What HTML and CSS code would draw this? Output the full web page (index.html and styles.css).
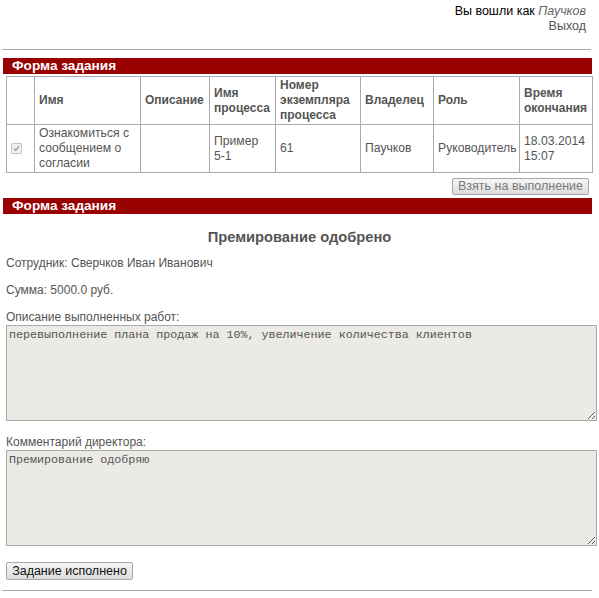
FILE: index.html
```html
<!DOCTYPE html>
<html lang="ru">
<head>
<meta charset="utf-8">
<title>Форма задания</title>
<link rel="stylesheet" href="styles.css">
</head>
<body>
<div class="userbar">
  <div>Вы вошли как <em>Паучков</em></div>
  <div><a href="#" class="logout">Выход</a></div>
</div>
<hr class="sep top-sep">

<div class="panel-title">Форма задания</div>
<table class="tasks">
  <colgroup>
    <col class="c-check"><col class="c-name"><col class="c-desc"><col class="c-proc"><col class="c-num"><col class="c-owner"><col class="c-role"><col class="c-time">
  </colgroup>
  <thead>
    <tr>
      <th></th>
      <th>Имя</th>
      <th>Описание</th>
      <th>Имя процесса</th>
      <th>Номер экземпляра процесса</th>
      <th>Владелец</th>
      <th>Роль</th>
      <th>Время окончания</th>
    </tr>
  </thead>
  <tbody>
    <tr>
      <td class="check-cell"><span class="check"><svg width="9" height="9" viewBox="0 0 9 9"><path d="M2 4.6 L3.7 6.3 L7 2.4" fill="none" stroke="#9a9a9a" stroke-width="1.4"/></svg></span></td>
      <td>Ознакомиться с сообщением о согласии</td>
      <td></td>
      <td>Пример 5-1</td>
      <td>61</td>
      <td>Паучков</td>
      <td>Руководитель</td>
      <td>18.03.2014 15:07</td>
    </tr>
  </tbody>
</table>
<div class="actions">
  <button class="btn btn-take" type="button">Взять на выполнение</button>
</div>

<div class="panel-title panel-title-flush">Форма задания</div>
<div class="form">
  <div class="form-title">Премирование одобрено</div>
  <div class="field">Сотрудник: Сверчков Иван Иванович</div>
  <div class="field">Сумма: 5000.0 руб.</div>
  <div class="field">Описание выполненных работ:</div>
  <textarea class="area" readonly>перевыполнение плана продаж на 10%, увеличение количества клиентов</textarea>
  <div class="field field-gap">Комментарий директора:</div>
  <textarea class="area" readonly>Премирование одобряю</textarea>
  <button class="btn btn-done" type="button">Задание исполнено</button>
</div>
<hr class="sep bottom-sep">
</body>
</html>
```

FILE: styles.css
```css
html, body {
  margin: 0;
  padding: 0;
  background: #fff;
}

body {
  font-family: "Liberation Sans", Arial, sans-serif;
  font-size: 12px;
  color: #555;
}

.userbar {
  text-align: right;
  padding: 4px 13px 0 0;
  line-height: 15px;
  font-size: 12.5px;
  color: #000;
}

.userbar em {
  color: #666;
}

.logout {
  color: #555;
  text-decoration: none;
}

.sep {
  border: 0;
  border-top: 1px solid #a9a9a9;
  height: 0;
  margin: 0;
}

.top-sep {
  margin: 15px 8px 0 2px;
}

.bottom-sep {
  margin: 10px 7px 0 2px;
}

.panel-title {
  margin: 8px 7px 0 3px;
  height: 16px;
  line-height: 16px;
  background: #990000;
  color: #fff;
  font-weight: bold;
  font-size: 13.6px;
  padding-left: 9px;
}

.panel-title-flush {
  margin-top: 0;
}

.tasks {
  border-collapse: collapse;
  table-layout: fixed;
  width: 586px;
  margin: 2px 0 0 6px;
}

.c-check { width: 28px; }
.c-name { width: 106px; }
.c-desc { width: 69px; }
.c-proc { width: 66px; }
.c-num { width: 85px; }
.c-owner { width: 73px; }
.c-role { width: 86px; }
.c-time { width: 73px; }

.tasks th,
.tasks td {
  border: 1px solid #aaa;
  padding: 1px 3px 1px 4px;
  line-height: 15px;
  text-align: left;
  vertical-align: middle;
  color: #555;
  font-size: 12.2px;
  height: 45px;
}

.tasks th {
  font-weight: bold;
  font-size: 12px;
}

.check-cell {
  text-align: center;
}

.check {
  display: inline-flex;
  width: 9px;
  height: 9px;
  border: 1px solid #c4c4c4;
  background: #f0f0f0;
  border-radius: 1px;
  vertical-align: middle;
}

.actions {
  display: flex;
  justify-content: flex-end;
  padding: 5px 10px 3px 0;
}

.btn {
  font-family: "Liberation Sans", Arial, sans-serif;
  font-size: 12.5px;
  border: 1px solid #a6a6a6;
  border-radius: 2px;
  background: linear-gradient(#f7f7f7, #dcdcdc);
  padding: 0 3px;
  line-height: 15px;
  margin: 0;
  white-space: nowrap;
}

.btn-take {
  height: 17px;
  width: 137px;
  color: #7a7a7a;
}

.btn-done {
  display: block;
  height: 18px;
  width: 127px;
  color: #111;
  margin-top: 16px;
}

.form {
  padding: 0 0 0 6px;
}

.form-title {
  margin-top: 15px;
  font-size: 14.7px;
  font-weight: bold;
  line-height: 17px;
  text-align: center;
  padding-right: 6px;
}

.field {
  line-height: 15px;
  margin-top: 12px;
}

.form-title + .field {
  margin-top: 10px;
}

.field-gap {
  margin-top: 14px;
}

.area {
  display: block;
  box-sizing: border-box;
  width: 591px;
  height: 96px;
  margin: 0;
  border: 1px solid #aaa;
  background: #ebeae4;
  color: #555;
  font-family: "Liberation Mono", "Courier New", monospace;
  font-size: 11.7px;
  line-height: 15px;
  padding: 2px 2px;
}
```
